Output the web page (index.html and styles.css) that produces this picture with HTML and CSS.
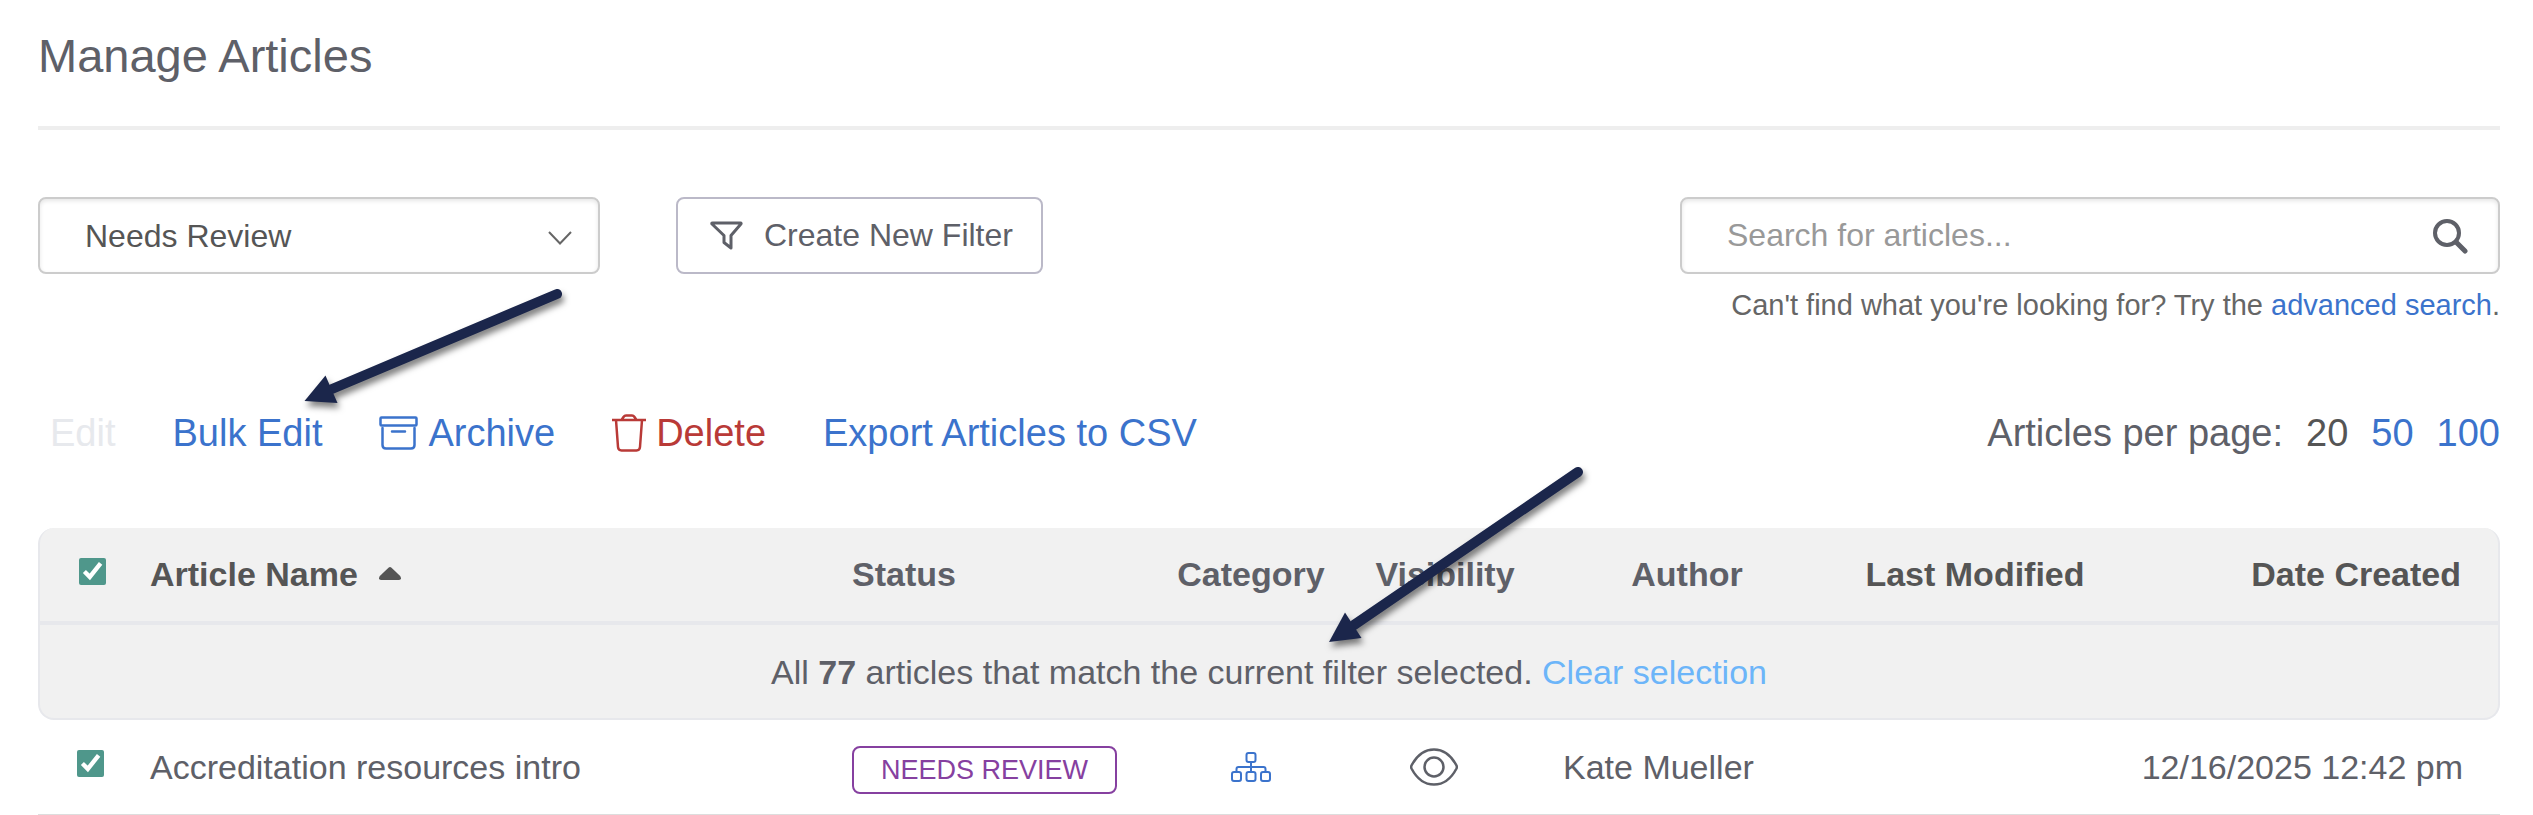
FILE: index.html
```html
<!DOCTYPE html>
<html lang="en">
<head>
    <meta charset="UTF-8">
    <meta name="viewport" content="width=device-width, initial-scale=1.0">
    <title>Manage Articles</title>
    <link rel="stylesheet" href="styles.css">
</head>
<body>
    <main class="page">
        <h1 class="page-title">Manage Articles</h1>

        <!-- Filters and search -->
        <div class="filter-bar">
            <div class="select-wrap">
                <select class="form-control filter-select" aria-label="Filter">
                    <option selected>Needs Review</option>
                </select>
                <svg class="select-arrow" width="24" height="14" viewBox="0 0 24 14" fill="none" stroke="#666" stroke-width="2">
                    <path d="M1 1l11 11.500L23 1"/>
                </svg>
            </div>

            <button type="button" class="btn-filter">
                <svg width="33" height="29" viewBox="0 0 33 29" fill="none" stroke="currentColor" stroke-width="3" stroke-linejoin="round">
                    <path d="M2.500 2h28q1 0 .4 1L21 14.500V27l-7-5.500v-7L2 3q-.6-1 .5-1z"/>
                </svg>
                Create New Filter
            </button>

            <form class="search-form">
                <div class="search-wrap">
                    <input type="text" class="form-control search-input" placeholder="Search for articles..." aria-label="Search for articles">
                    <button type="button" class="search-btn" aria-label="Search">
                        <svg width="36" height="36" viewBox="0 0 36 36" fill="none" stroke="currentColor" stroke-width="4" stroke-linecap="round">
                            <circle cx="15" cy="15" r="12"/>
                            <path d="M24 24l9 9" stroke-width="5"/>
                        </svg>
                    </button>
                </div>
                <p class="search-help">Can't find what you're looking for? Try the <a href="#">advanced search</a>.</p>
            </form>
        </div>

        <!-- Actions -->
        <div class="toolbar">
            <div class="actions">
                <button type="button" class="action" disabled>Edit</button>
                <button type="button" class="action">Bulk Edit</button>
                <button type="button" class="action">
                    <svg width="39" height="34" viewBox="0 0 39 34" fill="none" stroke="currentColor" stroke-width="2.500">
                        <rect x="1.500" y="1.500" width="36" height="8" rx="1"/>
                        <path d="M3.500 12v17q0 3.500 3.500 3.500h25q3.500 0 3.500-3.500V12M13 15.500h13" stroke-linecap="round"/>
                    </svg>
                    Archive
                </button>
                <button type="button" class="action action-delete">
                    <svg width="34" height="38" viewBox="0 0 34 38" fill="none" stroke="currentColor" stroke-width="2.500">
                        <path d="M0 6h34M4 6l2 27q.3 3.500 3.500 3.500h15q3.200 0 3.500-3.500l2-27M9.500 6l2-3q1-1.500 2.500-1.500h6q1.500 0 2.500 1.500l2 3"/>
                    </svg>
                    Delete
                </button>
                <a href="#" class="action">Export Articles to CSV</a>
            </div>
            <div class="per-page">
                <span>Articles per page:</span>
                <span class="current">20</span>
                <a href="#">50</a>
                <a href="#">100</a>
            </div>
        </div>

        <table class="articles">
            <colgroup>
                <col class="col-check">
                <col>
                <col class="col-status">
                <col class="col-category">
                <col class="col-visibility">
                <col class="col-author">
                <col class="col-modified">
                <col class="col-created">
            </colgroup>
            <thead>
                <tr>
                    <th class="check"><input type="checkbox" aria-label="Select all articles" checked></th>
                    <th>
                        <button type="button" class="sort">Article Name
                            <svg width="22" height="13" viewBox="0 0 22 13" fill="currentColor">
                                <path d="M9.500.7q1.500-1.400 3 0l8.700 8.300q2 3.500-1.200 4H2q-3.200-.5-1.200-4z"/>
                            </svg>
                        </button>
                    </th>
                    <th>Status</th>
                    <th class="center">Category</th>
                    <th class="center">Visibility</th>
                    <th class="center">Author</th>
                    <th class="center"><button type="button" class="sort">Last Modified</button></th>
                    <th class="created"><button type="button" class="sort">Date Created</button></th>
                </tr>
                <tr class="selection">
                    <td colspan="8">All <b>77</b> articles that match the current filter selected. <a href="#">Clear selection</a></td>
                </tr>
            </thead>
            <tbody>
                <tr>
                    <td class="check"><input type="checkbox" aria-label="Select Accreditation resources intro" checked></td>
                    <td>Accreditation resources intro</td>
                    <td class="status"><span class="badge">NEEDS REVIEW</span></td>
                    <td class="center">
                        <svg class="icon-category" width="40" height="30" viewBox="0 0 40 30" fill="none" stroke="currentColor" stroke-width="2">
                            <rect x="15.500" y="1" width="9" height="9" rx="2"/>
                            <rect x="1" y="20" width="9" height="9" rx="2"/>
                            <rect x="15.500" y="20" width="9" height="9" rx="2"/>
                            <rect x="30" y="20" width="9" height="9" rx="2"/>
                            <path d="M20 10v10M5.500 20v-3q0-2 2-2h25q2 0 2 2v3"/>
                        </svg>
                    </td>
                    <td class="center visibility">
                        <svg width="48" height="38" viewBox="0 0 48 38" fill="none" stroke="currentColor" stroke-width="2.500">
                            <path d="M1.500 17.500C6.500 8 14 1.500 24 1.500S41.500 8 46.500 17.500q.7 1.500 0 3C41.500 30 34 36.500 24 36.500S6.500 30 1.500 20.500q-.7-1.500 0-3z"/>
                            <circle cx="24" cy="19" r="9.500"/>
                        </svg>
                    </td>
                    <td class="author">Kate Mueller</td>
                    <td></td>
                    <td class="created">12/16/2025 12:42 pm</td>
                </tr>
            </tbody>
        </table>

        <!-- Callout arrows -->
        <svg class="arrow arrow-bulk" width="280" height="140" viewBox="0 0 280 140">
            <path class="shaft" d="M261 14L36 109"/>
            <path d="M8.500 121l21-25.500 12 27.500z"/>
        </svg>
        <svg class="arrow arrow-selected" width="280" height="200" viewBox="0 0 280 200">
            <path class="shaft" d="M258 14L34 167"/>
            <path d="M9 184l16-29.500 16.500 25.500z"/>
        </svg>
    </main>
</body>
</html>
```
FILE: styles.css
```css
* {
    box-sizing: border-box;
}

body {
    margin: 0;
    font-family: "Liberation Sans", Arial, sans-serif;
    font-size: 34px;
    line-height: 40px;
    color: #5e6068;
    background-color: #fff;
}

button,
input,
select {
    font-family: inherit;
}

a {
    color: #3b73cc;
    text-decoration: none;
}

svg {
    display: block;
    flex: none;
}

.page {
    position: relative;
    padding: 28px 33px 0 38px;
}

.page-title {
    margin: 0 0 67px;
    padding-bottom: 42px;
    border-bottom: 4px solid #eee;
    font-size: 47px;
    font-weight: normal;
    line-height: 56px;
}

/* Filters and search */
.filter-bar {
    display: flex;
    align-items: flex-start;
}

.form-control {
    width: 100%;
    height: 77px;
    border: 2px solid #ccc;
    border-radius: 8px;
    background-color: #fff;
    box-shadow: inset 0 2px 4px rgba(0, 0, 0, 0.1);
    font-size: 32px;
    color: #555;
}

.select-wrap {
    position: relative;
    width: 562px;
    margin-right: 76px;
}

.filter-select {
    appearance: none;
    padding: 0 60px 0 45px;
}

.select-arrow {
    position: absolute;
    top: 34px;
    right: 28px;
    pointer-events: none;
}

.btn-filter {
    display: flex;
    align-items: center;
    gap: 21px;
    height: 77px;
    padding: 0 28px 0 32px;
    border: 2px solid #bbb9c8;
    border-radius: 8px;
    background-color: #fff;
    font-size: 32px;
    color: #5e6068;
    cursor: pointer;
}

.search-form {
    width: 820px;
    margin-left: auto;
}

.search-wrap {
    position: relative;
}

.search-input {
    display: block;
    padding: 0 90px 0 45px;
}

.search-input::placeholder {
    color: #999;
}

.search-btn {
    position: absolute;
    top: 21px;
    right: 32px;
    padding: 0;
    border: none;
    background: none;
    color: #5e6068;
    cursor: pointer;
}

.search-help {
    margin: 15px 0 0;
    font-size: 29px;
    line-height: 32px;
    text-align: right;
    color: #666;
}

/* Actions */
.toolbar {
    display: flex;
    justify-content: space-between;
    margin: 90px 0 73px;
    font-size: 38px;
    line-height: 44px;
}

.actions {
    display: flex;
    gap: 57px;
    padding-left: 12px;
}

.action {
    display: flex;
    align-items: center;
    gap: 10px;
    padding: 0;
    border: none;
    background: none;
    font-size: 38px;
    line-height: 44px;
    color: #3b73cc;
    cursor: pointer;
}

.action:disabled {
    color: #e7e9ed;
    cursor: default;
}

.action-delete {
    color: #b93a37;
}

.per-page {
    display: flex;
    gap: 23px;
}

.per-page .current {
    color: #555;
}

/* Articles table */
.articles {
    width: 100%;
    table-layout: fixed;
    border-collapse: separate;
    border-spacing: 0;
}

.col-check {
    width: 112px;
}

.col-status {
    width: 311px;
}

.col-category {
    width: 176px;
}

.col-visibility {
    width: 212px;
}

.col-author {
    width: 272px;
}

.col-modified {
    width: 304px;
}

.col-created {
    width: 373px;
}

.articles th,
.articles td {
    padding: 0;
    text-align: left;
    vertical-align: middle;
}

.articles th {
    height: 97px;
    padding-bottom: 2px;
    background-color: #f1f1f1;
    border-bottom: 4px solid #e7e8ec;
}

.articles th:first-child {
    border-left: 2px solid #e7e8ec;
    border-top-left-radius: 16px;
}

.articles th:last-child {
    border-right: 2px solid #e7e8ec;
    border-top-right-radius: 16px;
}

.articles .selection td {
    height: 95px;
    border: 2px solid #e7e8ec;
    border-top: none;
    border-radius: 0 0 16px 16px;
    background-color: #f1f1f1;
    text-align: center;
}

.selection a {
    color: #6cb5f9;
}

.articles tbody td {
    height: 95px;
    border-bottom: 1px solid #ddd;
}

.articles .center {
    text-align: center;
}

.articles .check {
    padding: 0 0 7px 39px;
}

.check input {
    display: block;
    width: 27px;
    height: 27px;
    margin: 0;
    accent-color: #4f978b;
}

.articles .status {
    padding-top: 6px;
}

.articles .visibility {
    padding-right: 22px;
}

.articles .author {
    padding-left: 12px;
}

.articles .created {
    padding-right: 37px;
    text-align: right;
}

.center svg {
    margin: 0 auto;
}

.icon-category {
    color: #3b73cc;
}

.sort {
    display: inline-flex;
    align-items: center;
    gap: 21px;
    padding: 0;
    border: none;
    background: none;
    font-size: 34px;
    font-weight: bold;
    line-height: 40px;
    color: #555;
    cursor: pointer;
}

.badge {
    display: block;
    width: 265px;
    border: 2px solid #8640a0;
    border-radius: 8px;
    font-size: 27px;
    line-height: 44px;
    text-align: center;
    color: #8640a0;
}

/* Callout arrows */
.arrow {
    position: absolute;
    fill: #1b264b;
    filter: drop-shadow(2px 5px 3px rgba(0, 0, 0, 0.5));
    pointer-events: none;
}

.arrow .shaft {
    stroke: #1b264b;
    stroke-width: 10;
    stroke-linecap: round;
}

.arrow-bulk {
    top: 280px;
    left: 296px;
}

.arrow-selected {
    top: 458px;
    left: 1320px;
}
```
